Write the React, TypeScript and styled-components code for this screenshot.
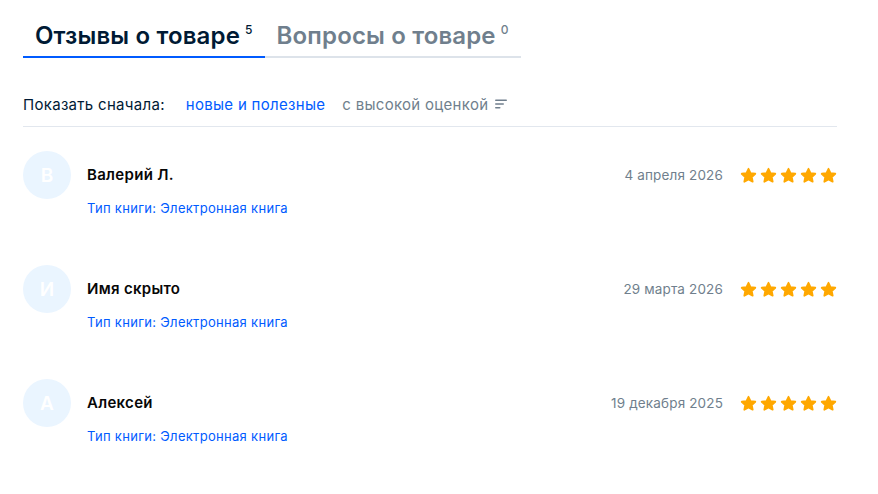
import styled, { createGlobalStyle } from 'styled-components';

const GlobalStyle = createGlobalStyle`
  body {
    margin: 0;
    background: #fff;
    font-family: Inter, "Noto Sans", sans-serif;
    color: #001a34;
  }
`;

const Page = styled.div`
  width: 814px;
  padding: 20px 0 0 23px;
`;

const Tabs = styled.div`
  display: inline-flex;
  vertical-align: top;
  border-bottom: 2px solid #dde3ea;
`;

const Tab = styled.div<{ $active?: boolean }>`
  display: flex;
  align-items: flex-start;
  flex-shrink: 0;
  white-space: nowrap;
  padding: 0 12px 4px;
  margin-bottom: -2px;
  border-bottom: 2px solid ${(p) => (p.$active ? '#005bff' : 'transparent')};
  color: ${(p) => (p.$active ? '#001a34' : '#707f8d')};
  font-size: 24px;
  font-weight: 600;
  line-height: 32px;
  letter-spacing: 0.15px;
`;

const Count = styled.span`
  font-size: 12px;
  line-height: 16px;
  font-weight: 500;
  margin-left: 5px;
  margin-top: 2px;
`;

const SortBar = styled.div`
  display: flex;
  align-items: center;
  height: 34px;
  margin-top: 29px;
  padding-bottom: 5px;
  border-bottom: 1px solid #e2e7ee;
  font-size: 15px;
  letter-spacing: 0.3px;
`;

const SortLabel = styled.span`
  color: #001a34;
  margin-right: 21px;
`;

const SortOption = styled.span<{ $active?: boolean }>`
  display: flex;
  align-items: center;
  gap: 6px;
  color: ${(p) => (p.$active ? '#005bff' : '#707f8d')};
  margin-right: 17px;
`;

const List = styled.div`
  display: flex;
  flex-direction: column;
  padding-top: 24px;
`;

const Review = styled.div`
  display: flex;
  height: 114px;
`;

const Avatar = styled.div`
  width: 48px;
  height: 48px;
  border-radius: 50%;
  background: #eaf5ff;
  color: #fff;
  display: flex;
  align-items: center;
  justify-content: center;
  font-size: 19px;
  font-weight: 600;
  flex-shrink: 0;
`;

const Body = styled.div`
  flex: 1;
  margin-left: 16px;
  padding-top: 12px;
`;

const Head = styled.div`
  display: flex;
  align-items: center;
  height: 22px;
`;

const Name = styled.div`
  flex: 1;
  font-size: 15px;
  font-weight: 600;
  letter-spacing: 0.3px;
  color: #070707;
`;

const DateText = styled.div`
  font-size: 13.5px;
  letter-spacing: 0.15px;
  color: #707f8d;
  margin-right: 17px;
  padding-top: 2px;
`;

const Stars = styled.div`
  display: flex;
  gap: 3px;
  padding-top: 2px;
`;

const Meta = styled.div`
  margin-top: 15px;
  font-size: 13px;
  letter-spacing: 0.3px;
  color: #005bff;
`;

const Star = () => (
  <svg width="17" height="17" viewBox="0 0 24 24">
    <path
      fill="#ffa800"
      stroke="#ffa800"
      strokeWidth="2.5"
      strokeLinejoin="round"
      d="M12 2.5l2.9 6.2 6.7.8-5 4.6 1.3 6.7L12 17.5l-5.9 3.3 1.3-6.7-5-4.6 6.7-.8z"
    />
  </svg>
);

const SortIcon = () => (
  <svg width="14" height="14" viewBox="0 0 14 14">
    <rect x="1" y="2.5" width="12" height="1.6" rx="0.8" fill="#707f8d" />
    <rect x="1" y="6.2" width="9" height="1.6" rx="0.8" fill="#707f8d" />
    <rect x="1" y="9.9" width="5.5" height="1.6" rx="0.8" fill="#707f8d" />
  </svg>
);

const reviews = [
  { letter: 'В', name: 'Валерий Л.', date: '4 апреля 2026' },
  { letter: 'И', name: 'Имя скрыто', date: '29 марта 2026' },
  { letter: 'А', name: 'Алексей', date: '19 декабря 2025' },
];

export default function App() {
  return (
    <>
      <GlobalStyle />
      <Page>
        <Tabs>
          <Tab $active>
            Отзывы о товаре<Count>5</Count>
          </Tab>
          <Tab>
            Вопросы о товаре<Count>0</Count>
          </Tab>
        </Tabs>
        <SortBar>
          <SortLabel>Показать сначала:</SortLabel>
          <SortOption $active>новые и полезные</SortOption>
          <SortOption>
            с высокой оценкой
            <SortIcon />
          </SortOption>
        </SortBar>
        <List>
          {reviews.map((r) => (
            <Review key={r.name}>
              <Avatar>{r.letter}</Avatar>
              <Body>
                <Head>
                  <Name>{r.name}</Name>
                  <DateText>{r.date}</DateText>
                  <Stars>
                    {[0, 1, 2, 3, 4].map((i) => (
                      <Star key={i} />
                    ))}
                  </Stars>
                </Head>
                <Meta>Тип книги: Электронная книга</Meta>
              </Body>
            </Review>
          ))}
        </List>
      </Page>
    </>
  );
}
